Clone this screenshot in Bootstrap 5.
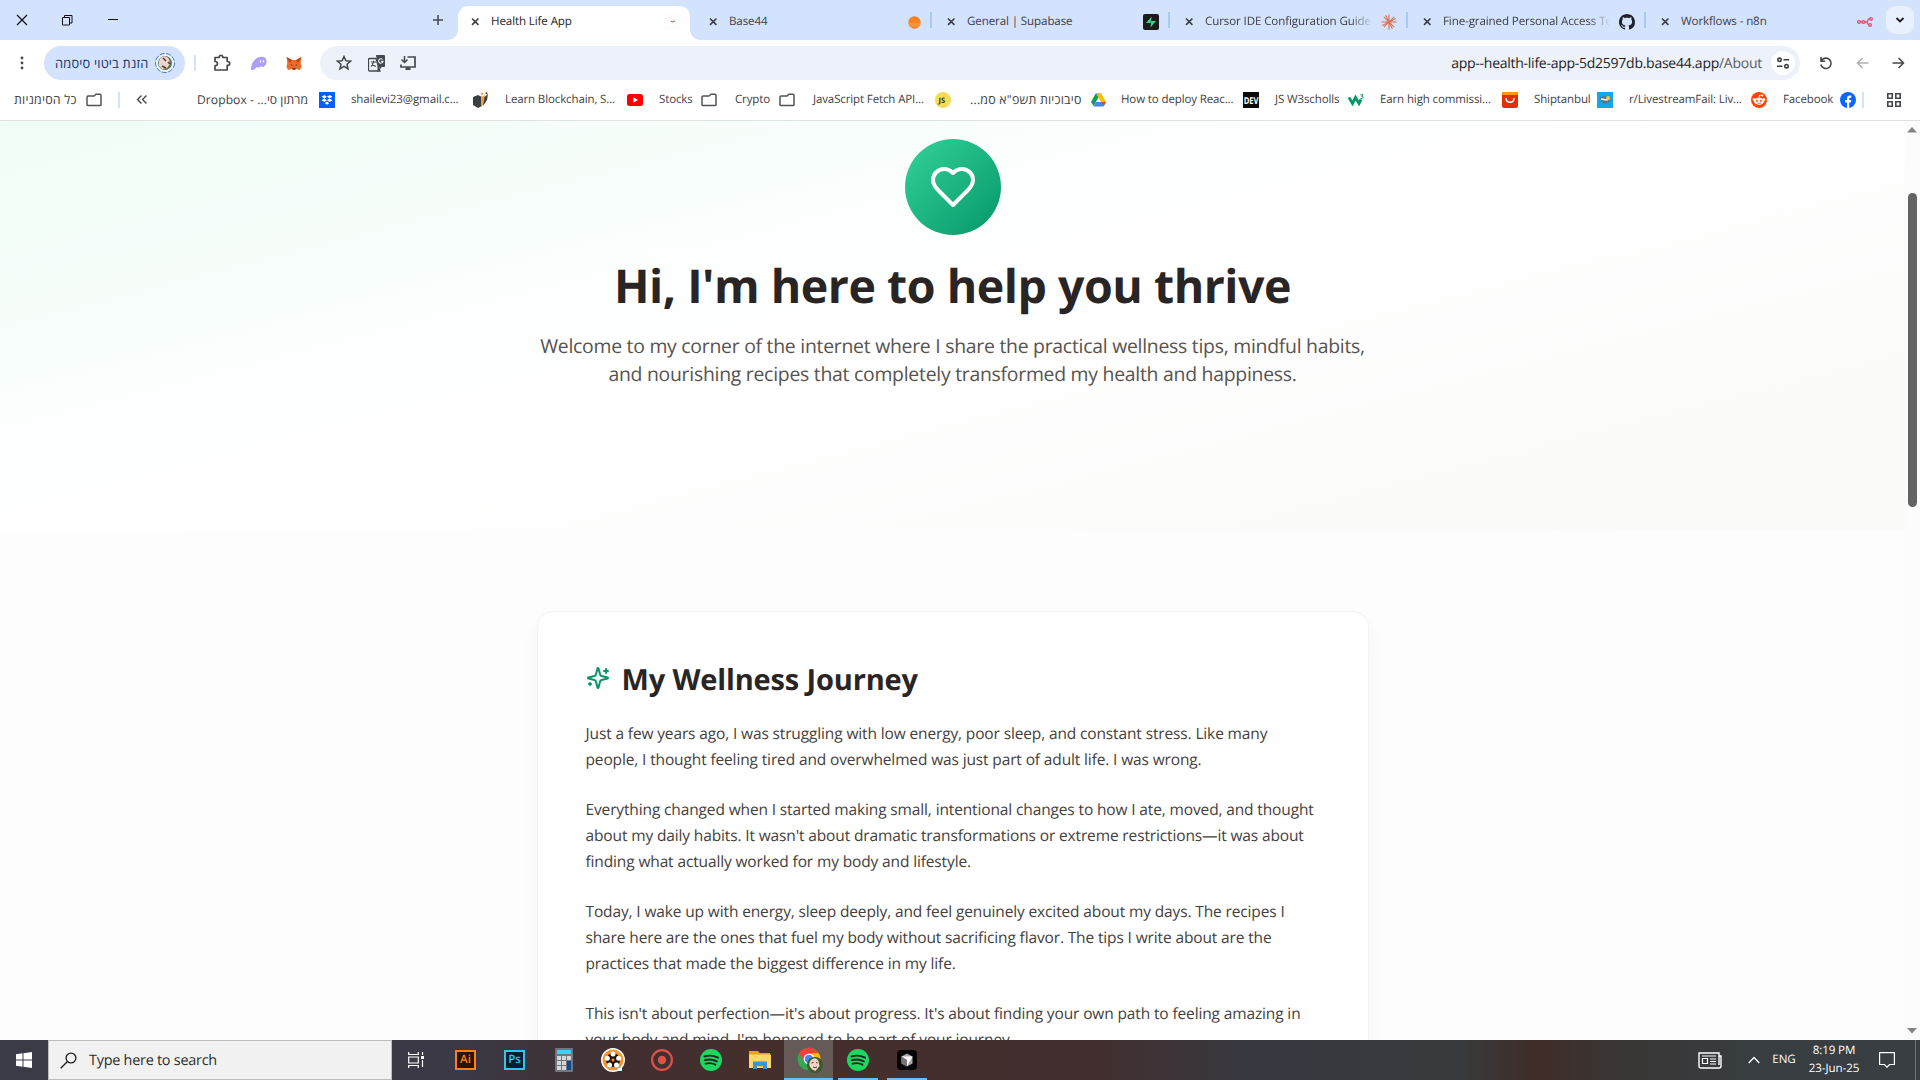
<!DOCTYPE html>
<html lang="en">
<head>
<meta charset="utf-8">
<title>Health Life App</title>
<link rel="stylesheet" href="https://cdn.jsdelivr.net/npm/bootstrap@5.3.0/dist/css/bootstrap.min.css">
<style>
body{width:1920px;height:1080px;overflow:hidden;font-family:"Open Sans","Noto Sans","DejaVu Sans",sans-serif;background:#fdfdfd;text-rendering:geometricPrecision}
svg{display:block;flex:none}
.cellbox{display:flex;align-items:center;justify-content:center;flex:none;width:36px}
.ui{font-size:11.5px;line-height:16px;letter-spacing:-.12px;color:#3f4144;white-space:nowrap}
.heb{font-size:12.4px;letter-spacing:.2px}
.heb.tight{font-size:12.1px;letter-spacing:.06px}
.w-menu{width:44px}.w-gap{width:19px}
/* tab strip */
.strip{height:40px;background:#d3e2fd;padding-right:6px}
.wctl{width:46px;height:40px}
.wctl:first-child{width:44px}
.newtab{margin-right:2px}
.tabitem{width:238px;height:34px;margin-top:6px;padding:0 13px 2px 12px;position:relative}
.tabitem .tt{width:166px;margin-left:10px;overflow:hidden;font-size:11.6px}
.tabitem::after{content:"";position:absolute;right:2px;top:6px;width:2px;height:16px;background:#a8c7fa}
.tabitem.on{width:232px;margin-right:6px;background:#fff;border-radius:10px 10px 0 0;padding-right:9px}
.tabitem.on::after{right:-10px;top:24px;width:10px;height:10px;background:radial-gradient(circle at 100% 0,#d3e2fd 9.5px,#fff 10px)}
.tabitem.on::before{content:"";position:absolute;left:-10px;top:24px;width:10px;height:10px;background:radial-gradient(circle at 0 0,#d3e2fd 9.5px,#fff 10px)}
.tabitem.on .tt{color:#1f1f1f}
.tabitem.end::after{display:none}
.tabitem .tt.fade-out{-webkit-mask-image:linear-gradient(90deg,#000 145px,transparent 168px);mask-image:linear-gradient(90deg,#000 145px,transparent 168px)}
.dropbtn{width:28px;height:28px;border-radius:9px;background:#eaf1fe;margin-top:6px}
/* toolbar */
.bar{height:46px;background:#fff}
.pill{width:141px;height:34px;border-radius:17px;background:#d3e2fd;padding:0 9px 0 11px}
.pill .heb{color:#14336f;font-size:12.8px}
.vline{width:2px;height:16px;background:#d3e2fd}
.omni{width:1480px;height:34px;border-radius:17px;background:#edf1fa;margin:0 8px;padding:0 5px 0 8px}
.omni .act{width:32px}
.url{font-size:14px;letter-spacing:-.26px;color:#1f1f1f;white-space:nowrap}
.url span{color:#5a5d61}
.siteinfo{width:24px;height:24px;border-radius:50%;background:#fff;margin-left:9px}
/* bookmarks */
.marks{height:35px;background:#fff;border-bottom:1px solid #dfe1e3;padding-bottom:7px}
.bm{display:flex;align-items:center;justify-content:space-between;flex:none;margin-right:16px}
.bm span{padding-top:1px}
.all{width:88px;margin-left:14px}
.drop{width:138px;margin-left:50px}
.w138{width:138px}
.stocks{width:58px;margin-right:18px}
.crypto{width:60px;margin-right:18px}
.fetch{margin-right:19px}
.drive{width:136px;margin-right:15px}
.w3s{width:90px;margin-right:15px}
.ship{width:79px}
.fb{width:73px;margin-right:6px}
.apps{margin-left:23px}
/* page */
.view{height:919px;overflow:hidden}
.hero{height:410px;padding-top:18px;background:linear-gradient(to bottom right,#ecfdf5,#fff 50%,#fafaf9) 0 100%/100% 488px no-repeat}
.orb{width:96px;height:96px;border-radius:50%;background:linear-gradient(to bottom right,#34d399,#059669)}
.hero h1{font-size:46.5px;letter-spacing:-.48px;font-weight:700;line-height:60px;margin:20px 0 17px;color:#292524}
.hero p{font-size:19.4px;letter-spacing:-.26px;line-height:28px;color:#57534e;margin:0}
.story{width:832px;height:520px;margin:80px auto 0;border:1px solid #f3f3f1;border-radius:16px;background:#fff;padding:47px 48px;box-shadow:0 10px 18px -2px rgba(0,0,0,.06)}
.story-head{margin-bottom:22px}
.story-head svg{margin:7px 12px 0 0}
.story h2{font-size:29px;letter-spacing:-.15px;font-weight:700;line-height:36px;color:#292524;margin:0;padding-top:3px}
.story p{font-size:15.5px;letter-spacing:-.135px;line-height:26px;color:#44403c;margin:0 0 24px;white-space:nowrap}
.scroller{width:15px;background:#fcfcfc;padding:6px 1px 6px 0}
.thumb{width:9px;height:314px;border-radius:5px;background:#636363;margin:60px 0 auto}
/* taskbar */
.task{height:40px;color:#fff;background:linear-gradient(90deg,#3b3b47 0,#3b3945 24%,#402f31 32%,#452f2c 40%,#422f2f 57%,#373840 65%,#383b3d 76%,#3f2d27 80%,#3a3634 84%,#373d40 91%,#383e41 100%)}
.start{width:48px}
.search{width:344px;background:#f1f1f1;border:1px solid #bdbdbd;padding-left:11px;color:#2c2c2c;font-size:14.4px;letter-spacing:-.24px}
.search span{padding-top:2px}
.app{width:49px;display:flex;align-items:center;justify-content:center;flex:none;position:relative}
.app.view-btn{width:48px;margin-right:1px}
.open::after{content:"";position:absolute;left:4.5px;right:4.5px;bottom:0;height:2px;background:#76b9ed}
.live{background:#665a59}.live::after{left:0;right:0}
.tile{width:21px;height:20px;font-size:11.5px;line-height:16px;font-weight:600;border:2px solid;text-align:center}
.ai{background:#261300;color:#ff7f18}.ps{background:#001d33;color:#31c5f0}
.tray{font-size:11.6px;letter-spacing:-.1px;line-height:18px;text-align:center}
.news{width:44px}.lang{width:24px}.clock{width:76px}.note{width:30px}
.peek{width:14px;margin-right:4px}
</style>
<script src="https://cdn.jsdelivr.net/npm/bootstrap@5.3.0/dist/js/bootstrap.bundle.min.js"></script>
</head>
<body>
<svg width="0" height="0" class="position-absolute">
<symbol id="x" viewBox="0 0 12 12"><path d="M2.2 2.2l7 7m0-7l-7 7" stroke="#3c4043" stroke-width="1.8"/></symbol>
<symbol id="folder" viewBox="0 0 16 14"><path d="M1 11.8V4.2Q1 3 2.2 3H8l2-1.8h4Q15 1.200 15 2.400V11.800Q15 12.600 14 12.600H2Q1 12.600 1 11.800z" fill="none" stroke="#505357" stroke-width="1.5"/></symbol>
<symbol id="spot" viewBox="0 0 22 22"><circle cx="11" cy="11" r="11" fill="#1ed760"/><path d="M4.500 7.500q7-2.200 13.500 1.200M5 11.200q6-1.800 11.800 1.100M5.600 14.700q5.200-1.500 9.800 1" stroke="#222" stroke-width="1.900" fill="none" stroke-linecap="round"/></symbol>
</svg>

<header>
<div class="strip d-flex">
  <div class="wctl cellbox"><svg width="12" height="12"><path d="M1 1l10 10M11 1L1 11" stroke="#111" stroke-width="1.200"/></svg></div>
  <div class="wctl cellbox"><svg width="11" height="11"><path d="M.5 2.500h7v7.500h-7zM2.500 2.500V.5h7.500v7.500H8" fill="none" stroke="#111"/></svg></div>
  <div class="wctl cellbox"><svg width="10" height="10"><path d="M0 4.500h10" stroke="#111"/></svg></div>
  <div class="cellbox ms-auto newtab"><svg width="10" height="10"><path d="M5 0v10M0 5h10" stroke="#45484c" stroke-width="1.500"/></svg></div>
  <div class="tabitem on d-flex align-items-center ui"><svg width="11" height="12"><use href="#x"/></svg><div class="tt">Health Life App</div><svg class="ms-auto" width="16" height="16"><rect width="16" height="16" fill="#fdfdfd"/><path d="M5.500 7l2.500 1" stroke="#d4574d"/><path d="M8 8l2-1.200" stroke="#43a05b" stroke-width="1.300"/></svg></div>
  <div class="tabitem d-flex align-items-center ui"><svg width="11" height="12"><use href="#x"/></svg><div class="tt">Base44</div><svg class="ms-auto" width="13" height="13"><circle cx="6.500" cy="6.500" r="6.200" fill="#f98125"/><path d="M1 8h11M1.500 10h10" stroke="#ffb45f" stroke-width=".7"/></svg></div>
  <div class="tabitem d-flex align-items-center ui"><svg width="11" height="12"><use href="#x"/></svg><div class="tt">General | Supabase</div><svg class="ms-auto" width="16" height="16"><rect width="16" height="16" rx="2" fill="#1c1c1c"/><path d="M8.700 2.500L3 8.900h4.500v1z" fill="#3ecf8e"/><path d="M7.500 13.500L13 7H8.500V5z" fill="#3ecf8e"/></svg></div>
  <div class="tabitem d-flex align-items-center ui"><svg width="11" height="12"><use href="#x"/></svg><div class="tt fade-out">Cursor IDE Configuration Guide</div><svg class="ms-auto" width="16" height="16"><path d="M8 .5v15M.5 8h15M2.800 2.800l10.400 10.400M13.200 2.800L2.800 13.200M4.700 1.300l6.600 13.400M1.300 11.500l13.400-7" stroke="#d97757" stroke-width="1.150"/></svg></div>
  <div class="tabitem d-flex align-items-center ui"><svg width="11" height="12"><use href="#x"/></svg><div class="tt fade-out">Fine-grained Personal Access Token</div><svg class="ms-auto" width="16" height="16" viewBox="0 0 16 16"><path fill="#1f2328" d="M8 0C3.580 0 0 3.580 0 8c0 3.540 2.290 6.530 5.470 7.590.4.070.55-.17.55-.38 0-.19-.01-.82-.01-1.490-2.010.37-2.530-.49-2.690-.94-.09-.23-.48-.94-.82-1.130-.28-.15-.68-.52-.01-.53.63-.01 1.080.58 1.230.82.72 1.210 1.870.87 2.330.66.070-.52.28-.87.51-1.070-1.780-.2-3.640-.89-3.640-3.950 0-.87.31-1.590.82-2.150-.08-.2-.36-1.020.08-2.120 0 0 .67-.21 2.200.82.640-.18 1.320-.27 2-.27s1.360.090 2 .27c1.530-1.040 2.200-.82 2.200-.82.440 1.100.160 1.920.080 2.120.510.560.820 1.270.820 2.150 0 3.070-1.870 3.750-3.650 3.950.290.250.540.730.540 1.480 0 1.070-.010 1.930-.010 2.200 0 .210.150.460.550.380A8.010 8.010 0 0 0 16 8c0-4.420-3.580-8-8-8z"/></svg></div>
  <div class="tabitem end d-flex align-items-center ui"><svg width="11" height="12"><use href="#x"/></svg><div class="tt">Workflows - n8n</div><svg class="ms-auto" width="16" height="10"><g fill="none" stroke="#ea4b71" stroke-width="1.300"><circle cx="2" cy="5" r="1.400"/><circle cx="6.500" cy="5" r="1.400"/><path d="M3.500 5h2M8 5h1.500q1 0 1.300-1.500T12 2h1M9.500 5q1 0 1.300 1.500T12 8"/><circle cx="14" cy="2" r="1.300"/><circle cx="13" cy="8" r="1.300"/></g></svg></div>
  <div class="dropbtn cellbox"><svg width="10" height="8"><path d="M1.500 2L5 5.500 8.500 2" fill="none" stroke="#1f1f1f" stroke-width="1.900"/></svg></div>
</div>

<div class="bar d-flex align-items-center">
  <div class="cellbox w-menu"><svg width="4" height="14"><g fill="#45484c"><circle cx="2" cy="2" r="1.400"/><circle cx="2" cy="7" r="1.400"/><circle cx="2" cy="12" r="1.400"/></g></svg></div>
  <div class="pill d-flex align-items-center justify-content-between"><span class="ui heb" dir="rtl">הזנת ביטוי סיסמה</span><svg width="22" height="22"><circle cx="11" cy="11" r="9.500" fill="#edf3ff" stroke="#4272b8" stroke-width="1" stroke-dasharray="5 1.500"/><circle cx="11" cy="11" r="7" fill="#5c7442"/><path d="M5 14q-1-7 3-9t7 2l1 5-3 4-5 1z" fill="#ecd5cf"/><path d="M9 6l3 3M8 14l4 2M14 10l2 2" stroke="#623a33" stroke-width="1.500"/></svg></div>
  <div class="cellbox w-gap"><div class="vline"></div></div>
  <div class="cellbox"><svg width="18" height="18"><path d="M2 3.500h4.200v-1a2 2 0 0 1 3.600 0v1h4.400v4h.6a1.900 1.900 0 0 1 0 3.800h-.6v4.700H2v-4.200q2.500-.2 2.500-2.200T2 7.500z" fill="none" stroke="#45484c" stroke-width="1.700" stroke-linejoin="round"/></svg></div>
  <div class="cellbox"><svg width="17" height="15"><path d="M1 13C1 6 6 .8 12 .8c3 0 4.500 2 4.500 4.700 0 3-2 5.500-4 5.500-1 0-1-.7-1.400-.7-.8 0-1.300 1.400-2.600 1.400-.8 0-.8-.6-1.300-.6C6 11.100 5 14 2.700 14 1.600 14 1 13.700 1 13z" fill="#ab9ff2"/><path d="M10.500 4.200v2.300M13.500 4.200v2.300" stroke="#fff" stroke-width="1.300"/></svg></div>
  <div class="cellbox"><svg width="16" height="15"><path d="M.5 1L6 4h4l5.500-3-.8 6 .8 4-1.500 3-4-1-1 1H7l-1-1-4 1-1.500-3 .8-4z" fill="#ef6b2a"/><path d="M.5 1L6 4 4 7zM15.500 1L10 4l2 3z" fill="#b9441c"/><path d="M4.500 8l2 1-.5 1zM11.500 8l-2 1 .5 1z" fill="#26313d"/><path d="M6.500 12h3v1.500h-3z" fill="#4a3b3a"/></svg></div>
  <div class="omni d-flex align-items-center">
    <div class="cellbox act"><svg width="16" height="16"><path d="M8 1.500l1.900 4.300 4.700.4L11 9.300l1.100 4.600L8 11.400l-4.100 2.500L5 9.300 1.400 6.200l4.700-.4z" fill="none" stroke="#45484c" stroke-width="1.500"/></svg></div>
    <div class="cellbox act"><svg width="17" height="17"><path d="M8 0h8q1 0 1 1v10q0 1-1 1h-6z" fill="#45484c"/><path d="M8 3.500H1.500q-1 0-1 1V15q0 1 1 1H12l-1.500-4z" fill="#edf1fa" stroke="#45484c" stroke-width="1.300"/><path d="M3 7h5M5.500 5.800V7Q5 10 3 11.500M4 8.500q1.500 2.500 4 3M10 16l3-4h-3z" fill="none" stroke="#45484c" stroke-width="1.100"/><path d="M14.500 4.500a2.200 2.200 0 1 0 .5 1.800h-2" fill="none" stroke="#edf1fa" stroke-width="1.100"/></svg></div>
    <div class="cellbox act"><svg width="16" height="16"><path d="M7.500 2H15v10H1V9.500" fill="none" stroke="#45484c" stroke-width="1.700"/><path d="M5.500 12.500h5V15h-5z" fill="#45484c"/><path d="M4.500 1v6M1.500 4.500l3 3 3-3" fill="none" stroke="#45484c" stroke-width="1.500"/></svg></div>
    <div class="url ms-auto">app--health-life-app-5d2597db.base44.app<span>/About</span></div>
    <div class="cellbox siteinfo"><svg width="14" height="12"><g fill="none" stroke="#3c4043" stroke-width="1.600"><circle cx="3.500" cy="2.800" r="1.700"/><path d="M7.500 2.800H13M1 9.200h5.500"/><circle cx="10.500" cy="9.200" r="1.700"/></g></svg></div>
  </div>
  <div class="cellbox"><svg width="14" height="14"><path d="M2 1v4.200h4.200M2.300 4.800A5.200 5.200 0 1 1 1.800 8.500" fill="none" stroke="#45484c" stroke-width="1.600"/></svg></div>
  <div class="cellbox"><svg width="13" height="12"><path d="M12.500 6H1.500M6.500 1l-5 5 5 5" fill="none" stroke="#aeb0b4" stroke-width="1.600"/></svg></div>
  <div class="cellbox"><svg width="13" height="12"><path d="M.5 6h11M6.500 1l5 5-5 5" fill="none" stroke="#45484c" stroke-width="1.600"/></svg></div>
</div>

<div class="marks d-flex align-items-center ui">
  <div class="bm all"><span class="heb" dir="rtl">כל הסימניות</span><svg width="16" height="14"><use href="#folder"/></svg></div>
  <div class="vline"></div>
  <svg class="ms-3" width="11" height="9"><path d="M5.500 .5l-4 4 4 4M10.500 .5l-4 4 4 4" fill="none" stroke="#45484c" stroke-width="1.400"/></svg>
  <div class="bm drop"><span dir="rtl" class="heb tight">מרתון סי... - Dropbox</span><svg width="16" height="16"><rect width="16" height="16" fill="#0061fe"/><path d="M5.300 3L8 4.700 5.300 6.400 2.600 4.700zM10.700 3l2.700 1.700-2.700 1.700L8 4.700zM5.300 6.600L8 8.300 5.300 10 2.600 8.300zM10.700 6.600l2.700 1.700-2.700 1.700L8 8.300zM8 9.500l2.200 1.700L8 12.800l-2.200-1.600z" fill="#fff"/></svg></div>
  <div class="bm w138"><span>shailevi23@gmail.c...</span><svg width="16" height="16"><path d="M0 5l5-2 4 2v9l-4 2-5-3z" fill="#3b3f43"/><path d="M8 5l4-2-1 9-3 3z" fill="#f3a13b"/><path d="M11.500 5L15 2l-1 6-4 6z" fill="#3b3f43"/><circle cx="9" cy="1.800" r="1.200" fill="#f3a13b"/><circle cx="13.500" cy="1.200" r="1" fill="#3b3f43"/></svg></div>
  <div class="bm w138"><span>Learn Blockchain, S...</span><svg width="16" height="12"><rect width="16" height="12" rx="2.500" fill="#f00"/><path d="M6.300 3.300v5.400L11 6z" fill="#fff"/></svg></div>
  <div class="bm stocks"><span>Stocks</span><svg width="16" height="14"><use href="#folder"/></svg></div>
  <div class="bm crypto"><span>Crypto</span><svg width="16" height="14"><use href="#folder"/></svg></div>
  <div class="bm w138 fetch"><span>JavaScript Fetch API...</span><svg width="16" height="16"><circle cx="8" cy="8" r="8" fill="#f7dc57"/><text x="3.600" y="10.800" font-size="7.500" font-weight="700" fill="#333">JS</text></svg></div>
  <div class="bm drive"><span class="heb" dir="rtl">סיבוכיות תשפ"א סמ...</span><svg width="15" height="14" viewBox="0 0 15 14"><path d="M5 0h5l5 9h-5z" fill="#fbbc04"/><path d="M5 0l2.500 4.500L2.500 13 0 9z" fill="#0f9d58"/><path d="M4.800 9H15l-2.500 4.600h-10z" fill="#4285f4"/><path d="M10.500 9H15l-2 3.800z" fill="#ea4335"/></svg></div>
  <div class="bm w138"><span>How to deploy Reac...</span><svg width="16" height="16"><rect width="16" height="16" fill="#0a0a0a"/><text x=".7" y="11.600" font-size="9.500" font-weight="700" textLength="14.600" lengthAdjust="spacingAndGlyphs" fill="#fff">DEV</text></svg></div>
  <div class="bm w3s"><span>JS W3scholls</span><svg width="17" height="12"><path d="M1 3.500l3.500 6 3-6 3.500 6 2-4" fill="none" stroke="#059862" stroke-width="2.800"/><path d="M12.500.8H15l-1.300 1.500Q15.500 2.300 15 3.700t-2.500.8" fill="none" stroke="#059862"/></svg></div>
  <div class="bm w138"><span>Earn high commissi...</span><svg width="16" height="16"><rect width="16" height="16" rx="2" fill="#e62e04"/><path d="M0 3V2q0-2 2-2h12q2 0 2 2v1z" fill="#ff9a00"/><path d="M4 6q0 4.300 4 4.300T12 6" fill="none" stroke="#fff" stroke-width="1.500"/></svg></div>
  <div class="bm ship"><span>Shiptanbul</span><svg width="16" height="16"><rect width="16" height="16" fill="#12a8ee"/><path d="M2 6q5-3 8-2l4 2-1 4-5 2q-3-1-6-6z" fill="#55788c"/><path d="M4 7l6 1 3-2" stroke="#fff" stroke-width="1.500" fill="none"/><circle cx="11" cy="6" r="2" fill="#f4c846"/></svg></div>
  <div class="bm w138"><span>r/LivestreamFail: Liv...</span><svg width="16" height="16"><circle cx="8" cy="8" r="8" fill="#ff4500"/><ellipse cx="8" cy="9.300" rx="5" ry="3.500" fill="#fff"/><circle cx="3" cy="7.600" r="1.300" fill="#fff"/><circle cx="13" cy="7.600" r="1.300" fill="#fff"/><path d="M8 6l.6-3 2.300.5" fill="none" stroke="#fff"/><circle cx="11.300" cy="3.500" r="1.100" fill="#fff"/><circle cx="6" cy="8.700" r="1" fill="#ff4500"/><circle cx="10" cy="8.700" r="1" fill="#ff4500"/><path d="M6 10.800q2 1.200 4 0" stroke="#ff4500" fill="none" stroke-width=".8"/></svg></div>
  <div class="bm fb"><span>Facebook</span><svg width="16" height="16"><circle cx="8" cy="8" r="8" fill="#0866ff"/><path d="M7 16v-5.500H5V8h2V6.500Q7 3.500 9.800 3.500h1.500v2.200h-1.200Q9.200 5.700 9.200 6.800V8h2.100l-.4 2.500H9.200V16z" fill="#fff"/></svg></div>
  <div class="vline"></div>
  <svg class="apps" width="14" height="14"><path d="M.8.8h4.400v4.400H.8zM8.800.8h4.400v4.400H8.800zM.8 8.800h4.400v4.400H.8zM8.800 8.800h4.400v4.400H8.800z" fill="none" stroke="#45484c" stroke-width="1.600"/></svg>
</div>
</header>

<div class="view d-flex">
  <main class="flex-grow-1">
    <section class="hero text-center">
      <div class="orb mx-auto d-flex align-items-center justify-content-center"><svg width="48" height="48" viewBox="0 0 24 24" fill="none" stroke="#fff" stroke-width="2" stroke-linecap="round" stroke-linejoin="round"><path d="M19 14c1.490-1.460 3-3.210 3-5.500A5.500 5.500 0 0 0 16.500 3c-1.760 0-3 .5-4.500 2-1.500-1.500-2.740-2-4.500-2A5.500 5.500 0 0 0 2 8.500c0 2.300 1.500 4.050 3 5.500l7 7Z"/></svg></div>
      <h1>Hi, I'm here to help you thrive</h1>
      <p>Welcome to my corner of the internet where I share the practical wellness tips, mindful habits,<br>and nourishing recipes that completely transformed my health and happiness.</p>
    </section>
    <article class="story">
      <div class="story-head d-flex align-items-start"><svg width="24" height="24" viewBox="0 0 24 24" fill="none" stroke="#059669" stroke-width="2" stroke-linecap="round" stroke-linejoin="round"><path d="M9.937 15.500A2 2 0 0 0 8.500 14.063l-6.135-1.582a.5.5 0 0 1 0-.962L8.500 9.936A2 2 0 0 0 9.937 8.500l1.582-6.135a.5.5 0 0 1 .963 0L14.063 8.500A2 2 0 0 0 15.500 9.937l6.135 1.581a.5.5 0 0 1 0 .964L15.500 14.063a2 2 0 0 0-1.437 1.437l-1.582 6.135a.5.5 0 0 1-.963 0zM20 3v4M22 5h-4M4 17v2M5 18H3"/></svg><h2>My Wellness Journey</h2></div>
      <p>Just a few years ago, I was struggling with low energy, poor sleep, and constant stress. Like many<br>people, I thought feeling tired and overwhelmed was just part of adult life. I was wrong.</p>
      <p>Everything changed when I started making small, intentional changes to how I ate, moved, and thought<br>about my daily habits. It wasn't about dramatic transformations or extreme restrictions—it was about<br>finding what actually worked for my body and lifestyle.</p>
      <p>Today, I wake up with energy, sleep deeply, and feel genuinely excited about my days. The recipes I<br>share here are the ones that fuel my body without sacrificing flavor. The tips I write about are the<br>practices that made the biggest difference in my life.</p>
      <p>This isn't about perfection—it's about progress. It's about finding your own path to feeling amazing in<br>your body and mind. I'm honored to be part of your journey.</p>
    </article>
  </main>
  <div class="scroller d-flex flex-column align-items-center">
    <svg width="10" height="6"><path d="M0 5.500L5 0l5 5.500z" fill="#858585"/></svg>
    <div class="thumb"></div>
    <svg width="10" height="6"><path d="M0 0h10L5 5.500z" fill="#858585"/></svg>
  </div>
</div>

<footer class="task d-flex">
  <div class="cellbox start"><svg width="16" height="16"><path d="M0 2.300L6.500 1.300V7.500H0zM7.500 1.200L16 0v7.500H7.500zM0 8.500h6.500v6.200L0 13.700zM7.500 8.500H16V16l-8.500-1.200z" fill="#fff"/></svg></div>
  <div class="search d-flex align-items-center"><svg class="me-2" width="17" height="17"><circle cx="11" cy="6" r="4.900" fill="none" stroke="#222" stroke-width="1.300"/><path d="M7.500 9.500L.7 16.300" stroke="#222" stroke-width="1.400"/></svg><span class="ms-1">Type here to search</span></div>
  <div class="app view-btn"><svg width="17" height="16"><path d="M.7 0v2.500h9.600V0M.7 16v-2.500h9.600V16M.7 5h9.600v6H.7zM14.500 0v3M14.500 8v7" fill="none" stroke="#fff" stroke-width="1.200"/><path d="M13 4h3v3h-3z" fill="#fff"/></svg></div>
  <div class="app"><div class="tile ai">Ai</div></div>
  <div class="app"><div class="tile ps">Ps</div></div>
  <div class="app"><svg width="18" height="24"><rect width="18" height="24" rx="1" fill="#71767c"/><path d="M2 2h14v4H2z" fill="#3bd0f7"/><path d="M2 8h4v4H2zM7 8h4v4H7zM12 8h4v4h-4zM2 13h4v4H2zM7 13h4v4H7zM2 18h4v4H2zM7 18h4v4H7z" fill="#d1d7db"/><path d="M12 13h4v9h-4z" fill="#114a8b"/></svg></div>
  <div class="app"><svg width="24" height="24"><circle cx="12" cy="12" r="11.200" fill="#f7922d" stroke="#fff" stroke-width="1.500"/><path d="M17 20h4v3h-4z" fill="#fff"/><circle cx="12" cy="12" r="7" fill="#24170d"/><g fill="#fff"><circle cx="12" cy="6" r="2.500"/><circle cx="17.700" cy="10.200" r="2.500"/><circle cx="15.500" cy="16.900" r="2.500"/><circle cx="8.500" cy="16.900" r="2.500"/><circle cx="6.300" cy="10.200" r="2.500"/></g><circle cx="12" cy="12" r="1.500" fill="#f7922d"/></svg></div>
  <div class="app"><svg width="22" height="22"><circle cx="11" cy="11" r="9.900" fill="none" stroke="#dc5148" stroke-width="2.200"/><circle cx="11" cy="11" r="4.200" fill="#dc5148"/></svg></div>
  <div class="app"><svg width="22" height="22"><use href="#spot"/></svg></div>
  <div class="app"><svg width="22" height="18"><path d="M0 0h9l1.500 2H21v4H0z" fill="#e5a317"/><path d="M0 3.500h22V17H0z" fill="#ffd766"/><path d="M4 10.500h14V18h-4v-3H8v3H4z" fill="#3d94da"/></svg></div>
  <div class="app open live"><svg class="ms-1" width="28" height="28"><circle cx="12" cy="13" r="11.300" fill="#34a853"/><path d="M2.200 7.300A11.300 11.300 0 0 1 21.800 7.300H12L7 16z" fill="#ea4335"/><path d="M21.800 7.300A11.300 11.300 0 0 1 12 24.300L17 13l-3-5.700z" fill="#fbbc05"/><circle cx="12" cy="13" r="5.400" fill="#fff"/><circle cx="12" cy="13" r="4.200" fill="#4285f4"/><circle cx="18" cy="19" r="8" fill="#3c5b2c"/><path d="M12.500 20q-1-5 3-7t6 2l1 5-4 5q-4-1-6-5z" fill="#f0d5c7"/><path d="M14.500 17l2-.5M19 16.500l1.500.5M16 21q2 1.500 4 0" fill="none" stroke="#593431" stroke-width="1"/></svg></div>
  <div class="app open"><svg width="22" height="22"><use href="#spot"/></svg></div>
  <div class="app open"><svg width="20" height="20"><rect width="20" height="20" rx="4" fill="#050505"/><path d="M10 3.500l5.500 3v7L10 16.500l-5.500-3v-7z" fill="#a8a8a8"/><path d="M4.500 6.500h11L10 16V10z" fill="#fff"/><path d="M4.500 6.500L10 10v6.500l-5.500-3z" fill="#777"/></svg></div>

  <div class="tray ms-auto d-flex align-items-center">
    <div class="cellbox news me-1"><svg width="24" height="17"><path d="M21 4h2v10q0 2-2 2H3q-2 0-2-2V1h20v12" fill="none" stroke="#fff" stroke-width="1.400"/><path d="M4.500 6.500h5v5h-5zM4 4h14M12 7h6M12 9.500h6M12 12h6" fill="none" stroke="#fff" stroke-width="1.200"/></svg></div>
    <div class="cellbox"><svg width="12" height="8"><path d="M.7 7L6 1.500 11.300 7" fill="none" stroke="#fff" stroke-width="1.300"/></svg></div>
    <div class="lang">ENG</div>
    <div class="clock">8:19 PM<br>23-Jun-25</div>
    <div class="cellbox note"><svg width="16" height="16"><path d="M.6.6h14.800v11.900h-4.800L8 15.200l-2.600-2.700H.6z" fill="none" stroke="#fff" stroke-width="1.200"/></svg></div>
    <div class="peek align-self-stretch border-end border-secondary"></div>
  </div>
</footer>
</body>
</html>
